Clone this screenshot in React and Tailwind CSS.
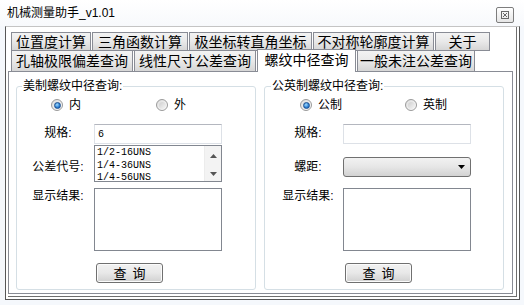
const rowOne = [
  { label: '位置度计算', w: 'w-[80px]' },
  { label: '三角函数计算', w: 'w-[96px]' },
  { label: '极坐标转直角坐标', w: 'w-[123px]' },
  { label: '不对称轮廓度计算', w: 'w-[121px]' },
  { label: '关于', w: 'w-[55px]' },
];

const rowTwo = [
  { label: '孔轴极限偏差查询', w: 'w-[122px]' },
  { label: '线性尺寸公差查询', w: 'w-[122px]' },
  { label: '螺纹中径查询', w: 'w-[99px]', active: true },
  { label: '一般未注公差查询', w: 'w-[118px]' },
];

const specs = ['1/2-16UNS', '1/4-36UNS', '1/4-56UNS'];

function Radio({ checked, label, className = '' }) {
  return (
    <div className={`flex items-center gap-[6px] ${className}`}>
      <span className="w-[12px] h-[12px] rounded-full border border-[#9a9a9a] bg-linear-to-br from-[#dcdcdc] to-white flex items-center justify-center">
        {checked ? (
          <span className="w-[7px] h-[7px] rounded-full border border-[#1b4f8f] bg-[radial-gradient(circle_at_40%_35%,#9fdcff,#2a7bd0_60%,#1a5aa8)]" />
        ) : (
          <span className="w-[7px] h-[7px] rounded-full bg-linear-to-br from-[#cfcfcf] to-[#f7f7f7]" />
        )}
      </span>
      <span className="text-[12px] leading-[14px]">{label}</span>
    </div>
  );
}

function QueryButton({ className = '' }) {
  return (
    <div className={`h-[20px] w-[67px] rounded-[3px] border border-[#707070] bg-linear-to-b from-[#f2f2f2] via-[#e8e8e8] to-[#d0d0d0] shadow-[inset_0_0_0_1px_#fbfbfb] flex items-center justify-center gap-[6px] text-[13px] leading-none ${className}`}>
      <span>查</span>
      <span>询</span>
    </div>
  );
}

function TextBox({ children }) {
  return (
    <div className="h-[20px] w-[128px] border border-[#dde1e7] border-t-[#b4b7bf] bg-white flex items-center pl-[3px] font-['Liberation_Mono',monospace] text-[10px]">
      {children}
    </div>
  );
}

function ResultBox() {
  return <div className="h-[63px] w-[128px] border border-[#828790] bg-white" />;
}

function Tab({ label, w, active }) {
  if (active) {
    return (
      <div className={`${w} h-[23px] -mb-[1px] border border-b-0 border-[#898c95] bg-white relative z-10 flex items-center justify-center pb-[2px] text-[14px] leading-none`}>
        {label}
      </div>
    );
  }
  return (
    <div className={`${w} h-full border border-[#898c95] bg-linear-to-b from-[#f3f3f3] via-[#e9e9e9] to-[#d6d6d6] flex items-center justify-center text-[14px] leading-none`}>
      {label}
    </div>
  );
}

export default function App() {
  return (
    <div className="w-[524px] h-[305px] overflow-hidden bg-[#f5f8fc] text-black font-['Liberation_Sans','Noto_Sans_CJK_SC',sans-serif]">
      {/* title bar */}
      <div className="h-[26px] flex justify-between pl-[7px] pr-[10px] bg-linear-to-b from-white to-[#f7f9fc]">
        <div className="mt-[6px] text-[12px] leading-[14px]">机械测量助手_v1.01</div>
        <div className="mt-[7px] w-[18px] h-[16px] rounded-[2px] border border-[#7d7d7d] bg-linear-to-b from-white to-[#e6e6e6] flex items-center justify-center">
          <svg width="8" height="8" viewBox="0 0 8 8">
            <rect x="0.5" y="0.5" width="7" height="7" fill="none" stroke="#6a6a6a" />
            <path d="M2 2l4 4M6 2l-4 4" stroke="#6a6a6a" strokeWidth="1" />
          </svg>
        </div>
      </div>

      {/* client frame */}
      <div className="ml-[5px] w-[515px] border border-[#575757] border-t-[#c4c4c4] bg-white pl-[2px] pr-[2px] pb-[2px]">
        <div className="border-r border-b border-[#6e6e6e] pb-[2px]">
          <div className="w-[505px] pt-[5px]">
            <div className="flex gap-[1px] ml-[3px] h-[19px]">
              {rowOne.map((t) => (
                <Tab key={t.label} {...t} />
              ))}
            </div>
            <div className="flex items-end gap-[1px] ml-[3px] h-[21px] -mt-[1px]">
              {rowTwo.map((t) =>
                t.active ? (
                  <Tab key={t.label} {...t} />
                ) : (
                  <div key={t.label} className={`${t.w} h-[21px] border border-b-0 border-[#898c95] bg-linear-to-b from-[#f3f3f3] via-[#e9e9e9] to-[#d6d6d6] flex items-center justify-center text-[14px] leading-none`}>
                    {t.label}
                  </div>
                )
              )}
            </div>

            {/* tab page */}
            <div className="h-[223px] border border-[#898c95] bg-white flex gap-[8px] pt-[7px] pl-[7px]">
              <fieldset className="w-[240px] h-[211px] m-0 p-0 border border-[#d5dfe5] rounded-[3px]">
                <legend className="ml-[5px] px-[1px] text-[12px] leading-[14px]">美制螺纹中径查询:</legend>
                <div className="flex items-center h-[14px] mt-[5px] pl-[34px]">
                  <Radio checked label="内" className="w-[105px]" />
                  <Radio label="外" />
                </div>
                <div className="flex mt-[12px]">
                  <div className="w-[77px] pl-[5px] mt-[2px] text-center text-[12px] leading-[14px]">规格:</div>
                  <TextBox>6</TextBox>
                </div>
                <div className="flex mt-[1px]">
                  <div className="w-[77px] pl-[5px] mt-[15px] text-center text-[12px] leading-[14px]">公差代号:</div>
                  <div className="h-[37px] w-[128px] border border-[#828790] bg-white flex overflow-hidden">
                    <div className="flex-1 pl-[2px] pt-[1px] font-['Liberation_Mono',monospace] text-[10px] leading-[12.5px]">
                      {specs.map((s) => (
                        <div key={s}>{s}</div>
                      ))}
                    </div>
                    <div className="w-[17px] bg-[#f3f3f3] border-l border-[#ececec] flex flex-col items-center pt-[8px]">
                      <svg width="7" height="4" viewBox="0 0 7 4">
                        <path d="M3.5 0L7 4H0z" fill="#555" />
                      </svg>
                      <svg width="7" height="4" viewBox="0 0 7 4" className="mt-[14px]">
                        <path d="M0 0h7L3.5 4z" fill="#555" />
                      </svg>
                    </div>
                  </div>
                </div>
                <div className="flex mt-[6px]">
                  <div className="w-[77px] pl-[5px] mt-[1px] text-center text-[12px] leading-[14px]">显示结果:</div>
                  <ResultBox />
                </div>
                <QueryButton className="mt-[12px] ml-[79px]" />
              </fieldset>

              <fieldset className="w-[240px] h-[211px] m-0 p-0 border border-[#d5dfe5] rounded-[3px]">
                <legend className="ml-[6px] px-[1px] text-[12px] leading-[14px]">公英制螺纹中径查询:</legend>
                <div className="flex items-center h-[14px] mt-[5px] pl-[35px]">
                  <Radio checked label="公制" className="w-[105px]" />
                  <Radio label="英制" />
                </div>
                <div className="flex mt-[12px]">
                  <div className="w-[78px] pl-[8px] mt-[2px] text-center text-[12px] leading-[14px]">规格:</div>
                  <TextBox />
                </div>
                <div className="flex items-center mt-[13px]">
                  <div className="w-[78px] pl-[8px] text-center text-[12px] leading-[14px]">螺距:</div>
                  <div className="h-[20px] w-[128px] rounded-[3px] border border-[#707070] bg-linear-to-b from-[#f2f2f2] via-[#e6e6e6] to-[#d2d2d2] flex items-center justify-end pr-[5px]">
                    <svg width="7" height="4" viewBox="0 0 7 4">
                      <path d="M0 0h7L3.5 4z" fill="#000" />
                    </svg>
                  </div>
                </div>
                <div className="flex mt-[11px]">
                  <div className="w-[78px] pl-[8px] mt-[1px] text-center text-[12px] leading-[14px]">显示结果:</div>
                  <ResultBox />
                </div>
                <QueryButton className="mt-[12px] ml-[80px]" />
              </fieldset>
            </div>
          </div>
        </div>
      </div>
    </div>
  );
}
